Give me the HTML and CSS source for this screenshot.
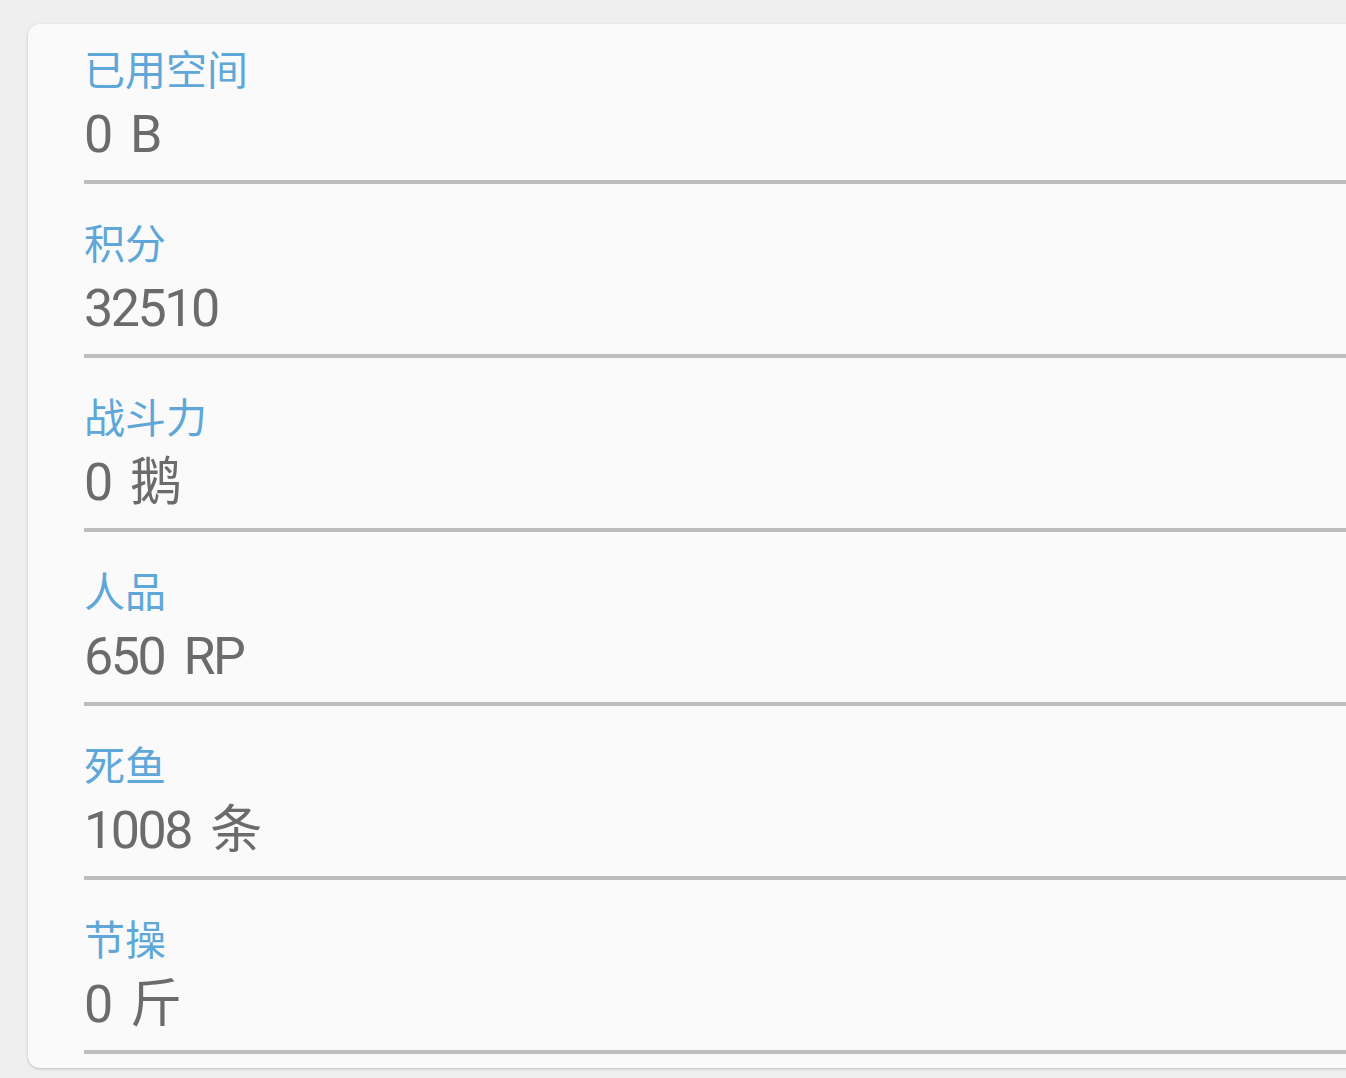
FILE: index.html
```html
<!DOCTYPE html>
<html lang="zh-CN">
<head>
    <meta charset="UTF-8">
    <meta name="viewport" content="width=device-width, initial-scale=1.0">
    <title>用户信息</title>
    <link rel="stylesheet" href="styles.css">
</head>
<body>
    <div class="card">
        <ul class="infoList">
            <li class="item">
                <div class="label">已用空间</div>
                <div class="value">0 B</div>
            </li>
            <li class="item">
                <div class="label">积分</div>
                <div class="value">32510</div>
            </li>
            <li class="item">
                <div class="label">战斗力</div>
                <div class="value">0 鹅</div>
            </li>
            <li class="item">
                <div class="label">人品</div>
                <div class="value">650 RP</div>
            </li>
            <li class="item">
                <div class="label">死鱼</div>
                <div class="value">1008 条</div>
            </li>
            <li class="item">
                <div class="label">节操</div>
                <div class="value">0 斤</div>
            </li>
        </ul>
    </div>
</body>
</html>
```

FILE: styles.css
```css
*{
    margin: 0;
    padding: 0;
}
html, body{
    height: 100%;
}
body{
    background-color: #efefef;
    overflow: hidden;
    font-family: Roboto, "Noto Sans CJK SC", sans-serif;
}
li{
    list-style: none;
}
.card{
    margin: 24px -30px 0 28px;
    padding: 0 0 14px 56px;
    background-color: #fafafa;
    border-radius: 12px;
    box-shadow: 0 1px 3px rgba(0, 0, 0, 0.22);
}
.item{
    padding: 32px 0 15px;
    border-bottom: 4px solid #bdbdbd;
}
.item:first-child{
    padding-top: 18px;
}
.label{
    height: 50px;
    line-height: 50px;
    font-size: 41px;
    font-family: "Noto Sans CJK SC", sans-serif;
    color: #5ea7d8;
}
.value{
    margin-top: 13px;
    height: 60px;
    line-height: 60px;
    font-size: 52px;
    letter-spacing: -2.5px;
    word-spacing: 9px;
    color: #6b6b6b;
}
```
